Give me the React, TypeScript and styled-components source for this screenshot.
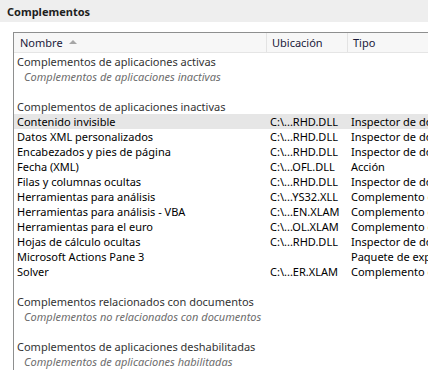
import React from "react";
import styled, { createGlobalStyle } from "styled-components";

const GlobalStyle = createGlobalStyle`
  body {
    margin: 0;
    background: #ffffff;
    font-family: "Noto Sans", "Open Sans", sans-serif;
    font-size: 11px;
    color: #000000;
  }
`;

const Page = styled.div`
  width: 428px;
  height: 370px;
  overflow: hidden;
  display: flex;
  flex-direction: column;
`;

const TitleBar = styled.div`
  height: 22px;
  flex: none;
  display: flex;
  align-items: center;
  padding-left: 7px;
  background: #eeeeee;
  font-weight: bold;
  font-size: 11px;
  color: #1e1e1e;
`;

const Body = styled.div`
  flex: 1;
  padding: 10px 0 0 13px;
  overflow: hidden;
`;

const ListBox = styled.div`
  width: 415px;
  height: 100%;
  overflow: hidden;
  border-left: 1px solid #8e8f8f;
  border-top: 1px solid #8e8f8f;
`;

const Columns = styled.div`
  display: grid;
  grid-template-columns: 252px 81px 120px;
`;

const Header = styled(Columns)`
  height: 19px;
  background: #f7f7f7;
  border-bottom: 1px solid #e5e5e5;
`;

const HeaderCell = styled.div<{ $first?: boolean }>`
  display: flex;
  align-items: center;
  gap: 6px;
  padding-left: ${(p) => (p.$first ? "6px" : "5px")};
  border-left: ${(p) => (p.$first ? "none" : "1px solid #e3e3e3")};
  color: #1a1a3a;
`;

const SortArrow = styled.span`
  width: 0;
  height: 0;
  border-left: 4px solid transparent;
  border-right: 4px solid transparent;
  border-bottom: 4px solid #a6a6a6;
  margin-top: -1px;
`;

const Content = styled.div`
  padding-top: 1px;
`;

const GroupTitle = styled.div`
  height: 15px;
  line-height: 15px;
  padding-left: 3px;
  color: #333333;
  white-space: nowrap;
`;

const GroupNote = styled.div`
  height: 15px;
  line-height: 15px;
  padding-left: 10px;
  font-style: italic;
  color: #6d6d6d;
  white-space: nowrap;
`;

const Spacer = styled.div`
  height: 15px;
`;

const Row = styled(Columns)<{ $selected?: boolean }>`
  height: 15px;
  line-height: 15px;
  background: ${(p) => (p.$selected ? "#e6e6e6" : "transparent")};
  white-space: nowrap;
`;

const Cell = styled.div<{ $pad: number }>`
  padding-left: ${(p) => p.$pad}px;
  overflow: hidden;
`;

const items = [
  { name: "Contenido invisible", path: "C:\\...RHD.DLL", type: "Inspector de documentos" },
  { name: "Datos XML personalizados", path: "C:\\...RHD.DLL", type: "Inspector de documentos" },
  { name: "Encabezados y pies de página", path: "C:\\...RHD.DLL", type: "Inspector de documentos" },
  { name: "Fecha (XML)", path: "C:\\...OFL.DLL", type: "Acción" },
  { name: "Filas y columnas ocultas", path: "C:\\...RHD.DLL", type: "Inspector de documentos" },
  { name: "Herramientas para análisis", path: "C:\\...YS32.XLL", type: "Complemento de Excel" },
  { name: "Herramientas para análisis - VBA", path: "C:\\...EN.XLAM", type: "Complemento de Excel" },
  { name: "Herramientas para el euro", path: "C:\\...OL.XLAM", type: "Complemento de Excel" },
  { name: "Hojas de cálculo ocultas", path: "C:\\...RHD.DLL", type: "Inspector de documentos" },
  { name: "Microsoft Actions Pane 3", path: "", type: "Paquete de expansión XML" },
  { name: "Solver", path: "C:\\...ER.XLAM", type: "Complemento de Excel" },
];

export default function App() {
  return (
    <Page>
      <GlobalStyle />
      <TitleBar>Complementos</TitleBar>
      <Body>
        <ListBox>
          <Header>
            <HeaderCell $first>
              Nombre <SortArrow />
            </HeaderCell>
            <HeaderCell>Ubicación</HeaderCell>
            <HeaderCell>Tipo</HeaderCell>
          </Header>
          <Content>
            <GroupTitle>Complementos de aplicaciones activas</GroupTitle>
            <GroupNote>Complementos de aplicaciones inactivas</GroupNote>
            <Spacer />
            <GroupTitle>Complementos de aplicaciones inactivas</GroupTitle>
            {items.map((item, i) => (
              <Row key={item.name} $selected={i === 0}>
                <Cell $pad={3}>{item.name}</Cell>
                <Cell $pad={4}>{item.path}</Cell>
                <Cell $pad={4}>{item.type}</Cell>
              </Row>
            ))}
            <Spacer />
            <GroupTitle>Complementos relacionados con documentos</GroupTitle>
            <GroupNote>Complementos no relacionados con documentos</GroupNote>
            <Spacer />
            <GroupTitle>Complementos de aplicaciones deshabilitadas</GroupTitle>
            <GroupNote>Complementos de aplicaciones habilitadas</GroupNote>
          </Content>
        </ListBox>
      </Body>
    </Page>
  );
}
